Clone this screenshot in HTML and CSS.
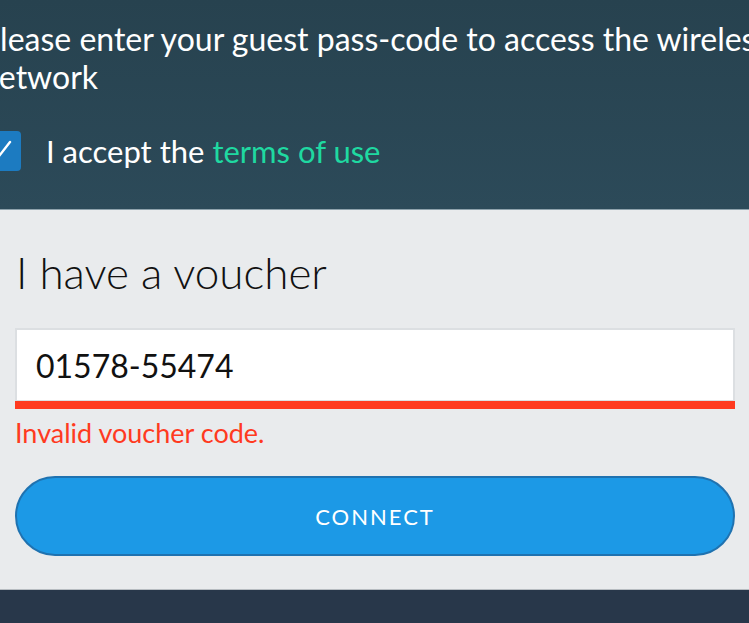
FILE: index.html
```html
<!DOCTYPE html>
<html lang="en">
<head>
    <meta charset="UTF-8">
    <meta name="viewport" content="width=device-width, initial-scale=1.0">
    <title>Guest Portal</title>
    <link rel="stylesheet" href="styles.css">
</head>
<body>
    <div class="page">
        <header class="intro">
            <p class="intro-text">Please enter your guest pass-code to access the wireless network</p>

            <label class="accept">
                <span class="check">
                    <svg width="40" height="40" viewBox="0 0 40 40">
                        <path d="M9 22 L15 29 L29 11" fill="none" stroke="#fff" stroke-width="2.4" stroke-linecap="round" stroke-linejoin="round"/>
                    </svg>
                </span>
                <span>I accept the <a href="#" class="terms">terms of use</a></span>
            </label>
        </header>

        <main class="voucher">
            <h2 class="voucher-title">I have a voucher</h2>

            <div class="field">
                <input type="text" class="field-input" value="01578-55474">
            </div>
            <p class="error">Invalid voucher code.</p>

            <button class="connect">CONNECT</button>
        </main>

        <footer class="footer"></footer>
    </div>
</body>
</html>
```

FILE: styles.css
```css
html, body {
    margin: 0;
    padding: 0;
}

body {
    font-family: Lato, "Open Sans", sans-serif;
    background-color: #28374a;
    overflow: hidden;
    width: 749px;
    height: 623px;
}

.page {
    display: flex;
    flex-direction: column;
    height: 623px;
}

.intro {
    background: linear-gradient(#27424f, #2c4a59);
    padding: 20px 0 38px;
    border-bottom: 1px solid #8ea2ac;
}

.intro-text {
    margin: 0 0 0 -19px;
    width: 800px;
    color: #ffffff;
    font-size: 32px;
    line-height: 38px;
}

.accept {
    display: flex;
    align-items: center;
    gap: 25px;
    margin: 35px 0 0 -19px;
    color: #ffffff;
    font-size: 31px;
    line-height: 40px;
}

.check {
    width: 40px;
    height: 40px;
    border-radius: 4px;
    background-color: #1c7bc1;
    display: flex;
}

.terms {
    color: #1fd9a1;
    text-decoration: none;
}

.voucher {
    background-color: #e9ebed;
    padding: 36px 14px 33px 15px;
    border-bottom: 1px solid #b7bcc1;
}

.voucher-title {
    margin: 0;
    font-size: 44px;
    font-weight: 300;
    line-height: 52px;
    color: #111111;
    padding-left: 1px;
}

.field {
    margin-top: 30px;
    border-bottom: 8px solid #ff3a1f;
}

.field-input {
    display: block;
    box-sizing: border-box;
    width: 100%;
    height: 73px;
    border: 2px solid #dcdfe2;
    border-bottom-width: 1px;
    background-color: #ffffff;
    padding: 0 19px;
    font-family: Lato, sans-serif;
    font-size: 32px;
    color: #111111;
    outline: none;
}

.error {
    margin: 9px 0 0;
    font-size: 27px;
    line-height: 30px;
    color: #ff3a1f;
}

.connect {
    display: block;
    width: 100%;
    height: 80px;
    margin-top: 28px;
    border: 2px solid #1f72b0;
    border-radius: 40px;
    background-color: #1c99e6;
    color: #ffffff;
    font-family: Lato, sans-serif;
    font-size: 22px;
    letter-spacing: 2px;
    cursor: pointer;
}

.footer {
    flex: 1;
    background-color: #28374a;
}
```
